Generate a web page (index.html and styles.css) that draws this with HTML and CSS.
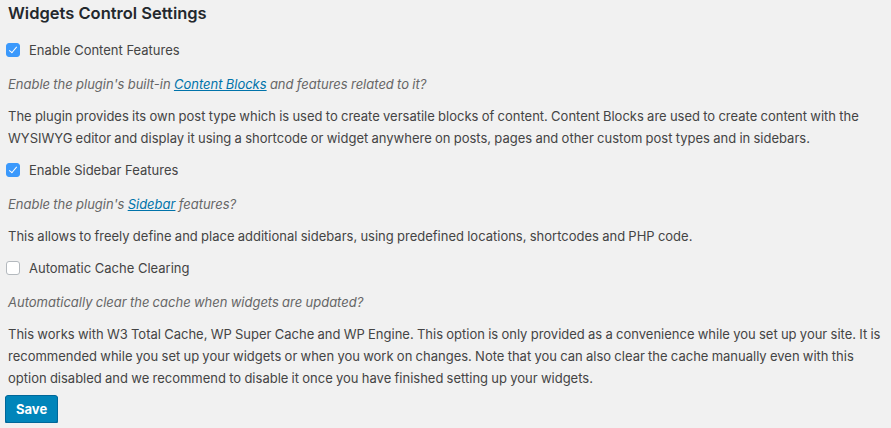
FILE: index.html
```html
<!doctype html>
<html lang="en">
  <head>
    <meta charset="UTF-8" />
    <title>Widgets Control Settings</title>
    <link rel="stylesheet" href="styles.css">
  </head>
  <body>
    <div class="wrap">
      <h2 class="title">Widgets Control Settings</h2>

      <div class="option">
        <label class="check">
          <span class="box checked"></span>
          Enable Content Features
        </label>
        <p class="description">
          Enable the plugin's built-in <a href="#">Content Blocks</a> and features related to it?
        </p>
        <p>
          The plugin provides its own post type which is used to create versatile blocks of content. Content Blocks are used to create content with the WYSIWYG editor and display it using a shortcode or widget anywhere on posts, pages and other custom post types and in sidebars.
        </p>
      </div>

      <div class="option">
        <label class="check">
          <span class="box checked"></span>
          Enable Sidebar Features
        </label>
        <p class="description">
          Enable the plugin's <a href="#">Sidebar</a> features?
        </p>
        <p>
          This allows to freely define and place additional sidebars, using predefined locations, shortcodes and PHP code.
        </p>
      </div>

      <div class="option">
        <label class="check">
          <span class="box"></span>
          Automatic Cache Clearing
        </label>
        <p class="description">
          Automatically clear the cache when widgets are updated?
        </p>
        <p>
          This works with W3 Total Cache, WP Super Cache and WP Engine. This option is only provided as a convenience while you set up your site. It is recommended while you set up your widgets or when you work on changes. Note that you can also clear the cache manually even with this option disabled and we recommend to disable it once you have finished setting up your widgets.
        </p>
      </div>

      <button class="button-primary">Save</button>
    </div>
  </body>
</html>
```

FILE: styles.css
```css
/* WordPress admin look */
body {
  margin: 0;
  background-color: #f1f1f1;
  color: #444;
  font-family: Inter, "Liberation Sans", sans-serif;
  font-size: 13px;
  line-height: 22px;
}
.wrap {
  padding: 0 0 0 8px;
}
.title {
  font-size: 16.5px;
  font-weight: 600;
  color: #23282d;
  line-height: 26px;
  margin: 0 0 13px;
}
.option {
  margin-bottom: 10px;
}
.option:last-of-type {
  margin-bottom: 0;
}
.option p {
  margin: 10px 0 0;
  word-spacing: -0.4px;
}
.check {
  display: flex;
  align-items: center;
  gap: 9px;
  margin-left: -2px;
  line-height: 22px;
}
.box {
  width: 14px;
  height: 14px;
  border: 1px solid #b4b9be;
  border-radius: 3px;
  background-color: #fff;
  box-sizing: border-box;
  position: relative;
}
.box.checked {
  background-color: #3b99fc;
  border-color: #3b99fc;
}
.box.checked::after {
  content: "";
  position: absolute;
  left: 4px;
  top: 1px;
  width: 3px;
  height: 7px;
  border: solid #fff;
  border-width: 0 1.5px 1.5px 0;
  transform: rotate(40deg);
}
.option .description {
  margin-top: 12px;
  font-style: italic;
  color: #666;
}
.description a {
  color: #0073aa;
}
.button-primary {
  margin: 6px 0 0 -3px;
  height: 28px;
  padding: 0 10px;
  border: 1px solid #006799;
  border-radius: 3px;
  background-color: #0085ba;
  color: #fff;
  font-family: inherit;
  font-size: 13px;
  font-weight: 700;
  box-shadow: 0 1px 0 #006799;
  cursor: pointer;
}
```
